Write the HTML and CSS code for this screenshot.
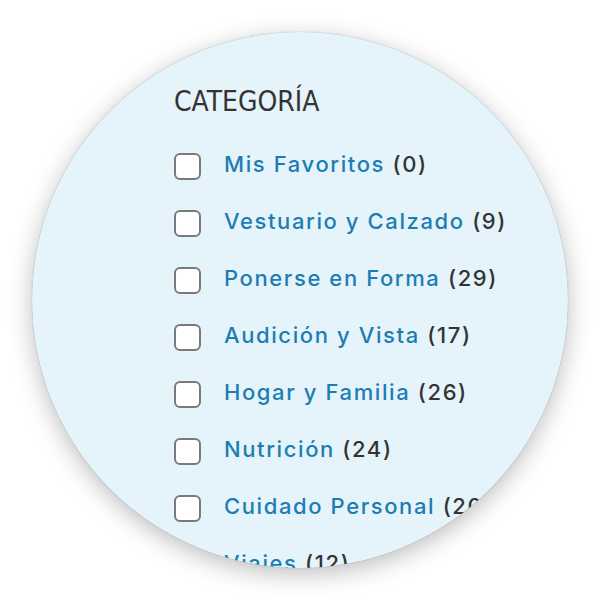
FILE: index.html
```html
<!DOCTYPE html>
<html lang="es">
<head>
<meta charset="utf-8">
<link rel="stylesheet" href="styles.css">
</head>
<body>
<div class="stage">
  <div class="circle">
    <div class="panel">
      <h2 class="title">CATEGORÍA</h2>
      <ul class="list">
        <li class="item"><span class="box"></span><span class="label"><a class="name">Mis Favoritos</a> <span class="count">(0)</span></span></li>
        <li class="item"><span class="box"></span><span class="label"><a class="name">Vestuario y Calzado</a> <span class="count">(9)</span></span></li>
        <li class="item"><span class="box"></span><span class="label"><a class="name">Ponerse en Forma</a> <span class="count">(29)</span></span></li>
        <li class="item"><span class="box"></span><span class="label"><a class="name">Audición y Vista</a> <span class="count">(17)</span></span></li>
        <li class="item"><span class="box"></span><span class="label"><a class="name">Hogar y Familia</a> <span class="count">(26)</span></span></li>
        <li class="item"><span class="box"></span><span class="label"><a class="name">Nutrición</a> <span class="count">(24)</span></span></li>
        <li class="item"><span class="box"></span><span class="label"><a class="name">Cuidado Personal</a> <span class="count">(20)</span></span></li>
        <li class="item"><span class="box"></span><span class="label"><a class="name">Viajes</a> <span class="count">(12)</span></span></li>
      </ul>
    </div>
  </div>
</div>
</body>
</html>
```
FILE: styles.css
```css
html, body {
  margin: 0;
  padding: 0;
  background: #ffffff;
}
.stage {
  width: 600px;
  height: 600px;
  padding: 32px;
  box-sizing: border-box;
}
.circle {
  width: 536px;
  height: 536px;
  border-radius: 50%;
  overflow: hidden;
  background: #e5f4fa;
  box-shadow: 0 6px 24px rgba(0, 0, 0, 0.26), 0 0 1px rgba(0, 0, 0, 0.35);
}
.panel {
  padding: 54px 0 0 142px;
}
.title {
  margin: 0 0 20px 0;
  font-family: "DejaVu Sans Condensed", "DejaVu Sans", sans-serif;
  font-stretch: condensed;
  font-weight: normal;
  font-size: 28px;
  line-height: 32px;
  letter-spacing: 0;
  color: #333333;
}
.list {
  list-style: none;
  margin: 0;
  padding: 0;
}
.item {
  display: flex;
  align-items: center;
  height: 57px;
  white-space: nowrap;
}
.box {
  flex: none;
  width: 27px;
  height: 27px;
  box-sizing: border-box;
  border: 2px solid #7a7a7a;
  border-radius: 6px;
  background: #ffffff;
  margin-right: 23px;
}
.label {
  font-family: Inter, "Liberation Sans", sans-serif;
  font-weight: 500;
  font-size: 22px;
  letter-spacing: 1.6px;
  margin-bottom: 6px;
}
.name {
  color: #1d7db3;
  text-decoration: none;
}
.count {
  color: #333333;
}
```
